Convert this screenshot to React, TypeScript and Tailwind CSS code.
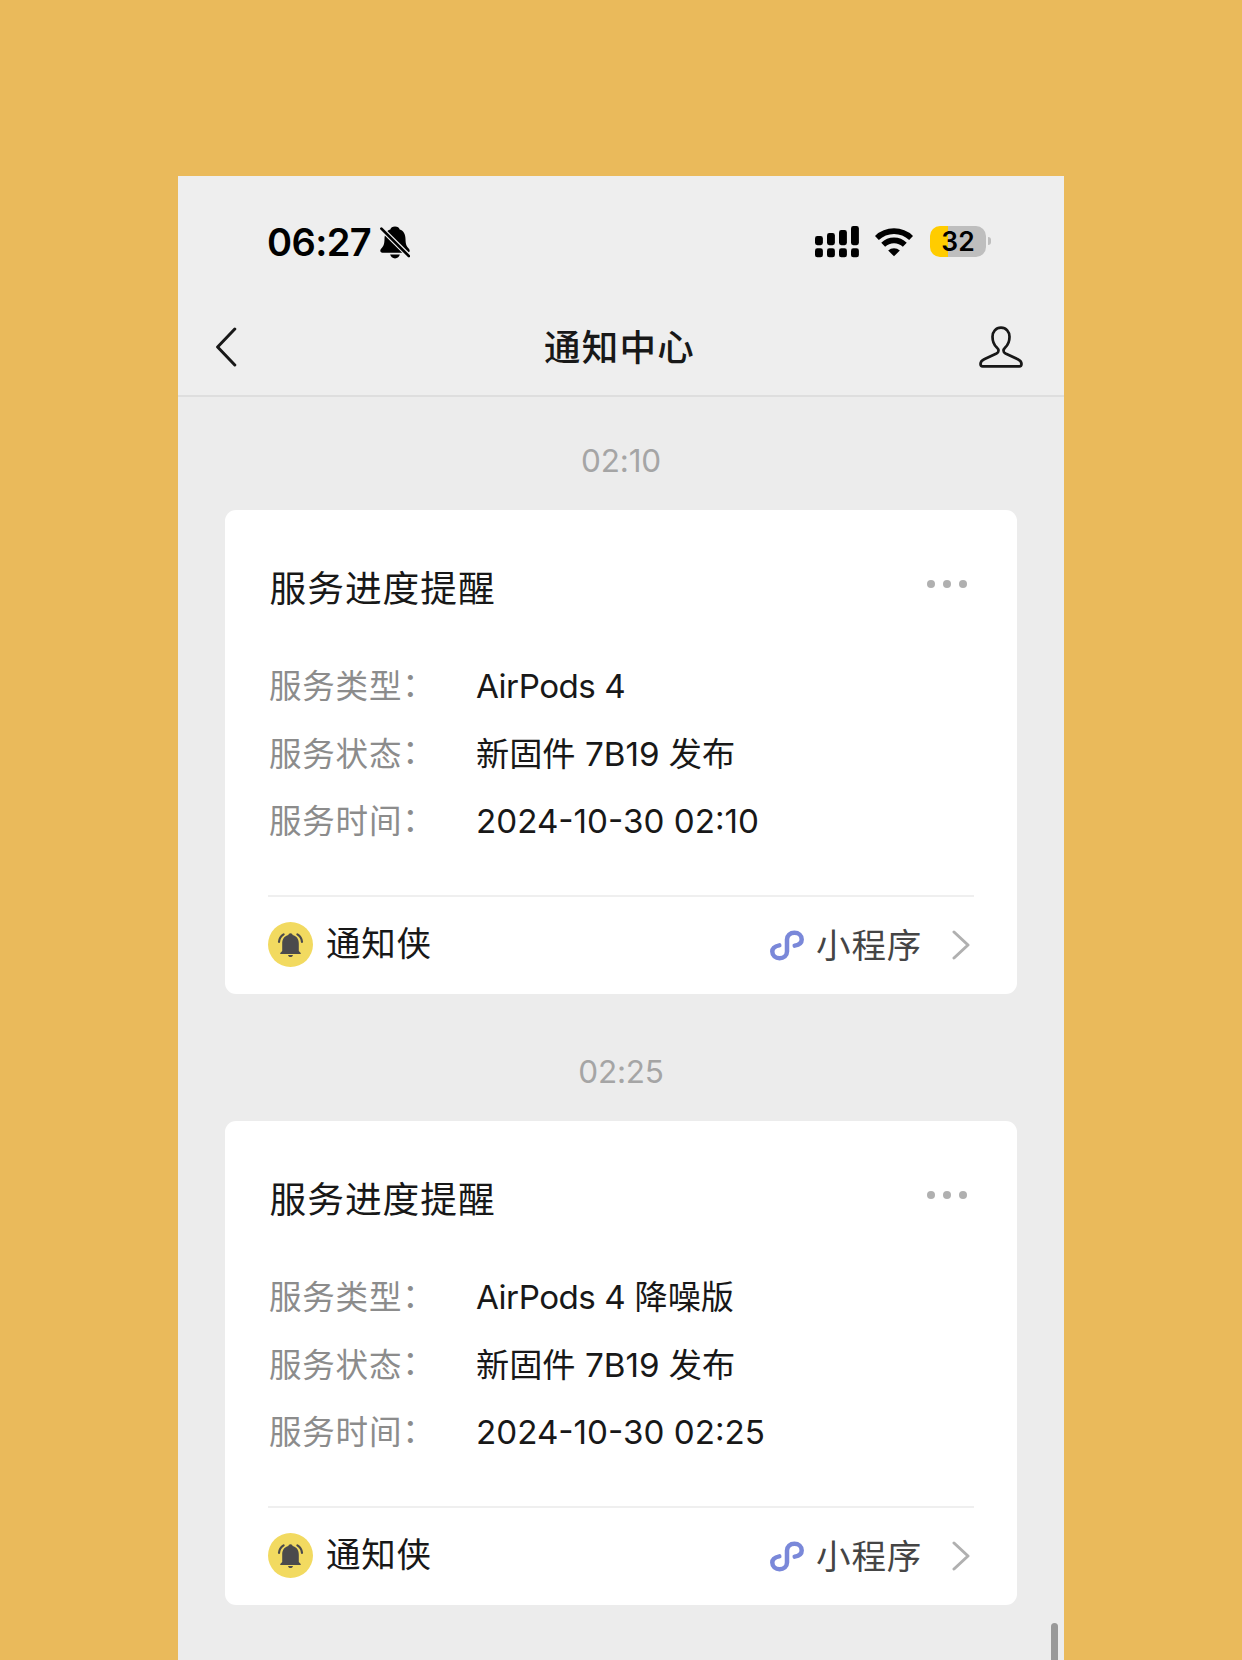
import React from 'react';

interface Notice {
  time: string;
  title: string;
  rows: { label: string; value: string }[];
}

const notices: Notice[] = [
  {
    time: '02:10',
    title: '服务进度提醒',
    rows: [
      { label: '服务类型', value: 'AirPods 4' },
      { label: '服务状态', value: '新固件 7B19 发布' },
      { label: '服务时间', value: '2024-10-30 02:10' },
    ],
  },
  {
    time: '02:25',
    title: '服务进度提醒',
    rows: [
      { label: '服务类型', value: 'AirPods 4 降噪版' },
      { label: '服务状态', value: '新固件 7B19 发布' },
      { label: '服务时间', value: '2024-10-30 02:25' },
    ],
  },
];

const BellSlashIcon = () => (
  <svg className="w-[30px] h-[33px]" viewBox="0 0 30 33" fill="none">
    <path d="M15 0.500c-2.600 0-4.200 1.300-4.700 3.100C6.300 4.900 4.600 8.300 4.500 13c-.1 5-.9 6.700-2.500 8.700C1 22.900.3 23.700.3 24.800c0 1 .8 1.900 2 1.900h25.400c1.200 0 2-.9 2-1.900 0-1.100-.7-1.900-1.700-3.100-1.600-2-2.400-3.700-2.500-8.700-.1-4.700-1.800-8.100-5.800-9.400-.5-1.800-2.100-3.100-4.700-3.100z" fill="#000" />
    <path d="M10.200 28.600h9.600c-.5 2.300-2.300 3.900-4.800 3.900s-4.300-1.600-4.800-3.900z" fill="#000" />
    <path d="M-1 0.300 31 32" stroke="#eee" strokeWidth="5" />
    <path d="M1.400 2.600 28.900 30.100" stroke="#000" strokeWidth="2.700" strokeLinecap="round" />
  </svg>
);

const SignalIcon = () => (
  <svg className="w-[44px] h-[32px]" viewBox="0 0 44 32" fill="#000">
    <rect x="0" y="10" width="7.900" height="9.200" rx="2.400" />
    <rect x="12" y="7" width="7.900" height="12.200" rx="2.400" />
    <rect x="24" y="4" width="7.900" height="15.200" rx="2.400" />
    <rect x="36" y="0" width="7.900" height="19.200" rx="2.400" />
    <rect x="0" y="22.300" width="7.900" height="9" rx="2.400" />
    <rect x="12" y="22.300" width="7.900" height="9" rx="2.400" />
    <rect x="24" y="22.300" width="7.900" height="9" rx="2.400" />
    <rect x="36" y="22.300" width="7.900" height="9" rx="2.400" />
  </svg>
);

const WifiIcon = () => (
  <svg className="w-[38px] h-[29px]" viewBox="0 0 38 29" fill="none" stroke="#000" strokeWidth="5.600">
    <path d="M1.900 10a24.800 24.800 0 0 1 34.200 0" />
    <path d="M8.200 16.700a15.600 15.600 0 0 1 21.600 0" />
    <path d="M19 28.300 13.200 22.500a8.300 8.300 0 0 1 11.600 0z" fill="#000" stroke="none" />
  </svg>
);

const PersonIcon = () => (
  <svg className="w-[44px] h-[42px]" viewBox="0 0 44 42" fill="none" stroke="#181818" strokeWidth="2.700" strokeLinejoin="round">
    <path d="M22 1.700c-5.200 0-8.500 3.900-8.500 9 0 5 1.600 8.300 4.300 10.700 2.200 2 2.400 4.700-.3 6.100L5.200 33.200C2.600 34.400 1.500 35.600 1.500 38c0 1.600.7 2.300 2.200 2.300h36.600c1.500 0 2.200-.7 2.200-2.300 0-2.400-1.100-3.600-3.700-4.800L26.500 27.500c-2.700-1.400-2.500-4.100-.3-6.100 2.700-2.400 4.300-5.700 4.300-10.700 0-5.100-3.300-9-8.500-9z" />
  </svg>
);

const BellBadge = () => (
  <svg className="w-[45px] h-[45px]" viewBox="0 0 45 45" fill="none">
    <circle cx="22.500" cy="22.500" r="22.500" fill="#f2da60" />
    <path d="M22.500 11.300c-1.200 0-2 .8-2.100 1.800-4.200 1-6.200 4.300-6.200 8.600v7.300l-1.700 1.700c-.6.600-.3 1.400.5 1.400h19c.8 0 1.100-.8.5-1.400L30.800 29v-7.300c0-4.300-2-7.600-6.200-8.600-.1-1-.9-1.800-2.100-1.800z" fill="#4b4a4c" />
    <path d="M20 33h5c-.2 1.300-1.200 2.100-2.500 2.100S20.200 34.300 20 33z" fill="#4b4a4c" />
    <path d="M15.600 12.400c-2.700 1.700-4.300 4.200-4.600 7.400M29.400 12.400c2.700 1.700 4.300 4.200 4.600 7.400" stroke="#4b4a4c" strokeWidth="2.200" strokeLinecap="round" />
  </svg>
);

const MiniProgramIcon = () => (
  <svg className="w-[34px] h-[31px]" viewBox="0 0 34 31" fill="none" stroke="#7a88d9" strokeWidth="4.500" strokeLinecap="round">
    <path d="M9.300 15.400C5 16.200 2.300 18.300 2.300 21.600c0 3.900 3.200 6.700 7.300 6.700s7.400-2.800 7.400-6.700V9.400c0-3.900 3.200-6.700 7.400-6.700s7.300 2.800 7.300 6.700c0 3.300-2.700 5.400-7 6.200" />
  </svg>
);

const StatusBar = () => (
  <div className="flex h-[132px] items-center justify-between pl-[89px] pr-[73px]">
    <div className="flex items-center">
      <span className="w-[113px] text-[38px] font-semibold leading-none tracking-[-0.600px] text-black">06:27</span>
      <BellSlashIcon />
    </div>
    <div className="flex items-center">
      <SignalIcon />
      <div className="ml-4">
        <WifiIcon />
      </div>
      <div className="mb-px ml-[17px] flex h-[31px] w-[56px] items-center justify-center rounded-[10px] bg-linear-to-r from-[#ffcc00] from-33% to-[#bebebe] to-33%">
        <span className="text-[26.500px] font-semibold leading-none text-black">32</span>
      </div>
      <div className="mb-0.5 ml-0.5 h-[8px] w-[3px] rounded-r-full bg-[#bebebe]" />
    </div>
  </div>
);

const NavBar = () => (
  <div className="flex h-[89px] items-center justify-between border-b-2 border-[#dedede] pb-[9px] pl-[38px] pr-[41px]">
    <svg className="w-[44px] h-[40px]" viewBox="0 0 44 40" fill="none" stroke="#181818" strokeWidth="3" strokeLinecap="round" strokeLinejoin="round">
      <path d="M18.800 2 1.600 20l17.200 18" />
    </svg>
    <h1 className="pt-[3px] text-[36.500px] font-medium leading-none tracking-[1.200px] text-[#181818]">通知中心</h1>
    <PersonIcon />
  </div>
);

const NoticeCard: React.FC<{ notice: Notice }> = ({ notice }) => (
  <section>
    <div className="flex h-[99px] items-center justify-center text-[31.500px] tracking-[-0.200px] text-[#a5a5a5]">{notice.time}</div>
    <div className="mx-[47px] h-[484px] rounded-[11px] bg-white px-[43px]">
      <div className="flex h-[142px] items-center justify-between pt-[16px]">
        <h2 className="pl-[1.500px] pt-px text-[36.700px] leading-none tracking-[1px] text-[#181818]">{notice.title}</h2>
        <div className="mr-[7px] flex gap-2 pb-[10px]">
          <i className="size-2 rounded-full bg-[#b0b0b0]" />
          <i className="size-2 rounded-full bg-[#b0b0b0]" />
          <i className="size-2 rounded-full bg-[#b0b0b0]" />
        </div>
      </div>
      <dl className="pt-px">
        {notice.rows.map((row) => (
          <div key={row.label} className="flex h-[67.600px] items-center whitespace-nowrap leading-none">
            <dt className="flex w-[208px] pl-px pt-px text-[32.500px] tracking-[0.800px] text-[#8c8c8c]">
              {row.label}
              <span className="-mt-[2.500px]">：</span>
            </dt>
            <dd className="text-[33.200px] text-[#181818]">
              {row.value.startsWith('AirPods') ? (
                <>
                  <span className="tracking-[-0.500px]">AirPods 4</span>
                  {row.value.slice(9)}
                </>
              ) : (
                row.value
              )}
            </dd>
          </div>
        ))}
      </dl>
      <div className="mt-[39px] flex h-[99px] items-center justify-between border-t-2 border-[#efefef]">
        <div className="flex items-center gap-3 pb-px">
          <BellBadge />
          <span className="pb-[2px] pl-px text-[34.500px] leading-none tracking-[0.800px] text-[#181818]">通知侠</span>
        </div>
        <div className="flex items-center pr-1">
          <MiniProgramIcon />
          <span className="ml-3 pt-px text-[34.500px] leading-none tracking-[0.800px] text-[#454545]">小程序</span>
          <svg className="ml-[30px] w-[18px] h-[30px]" viewBox="0 0 18 30" fill="none" stroke="#b0b0b0" strokeWidth="3" strokeLinecap="round" strokeLinejoin="round">
            <path d="M2 2l14 13L2 28" />
          </svg>
        </div>
      </div>
    </div>
  </section>
);

const App: React.FC = () => {
  return (
    <div className="h-[1660px] w-[1242px] overflow-hidden bg-[#eaba5b] pl-[178px] pt-[176px] font-['Inter','Noto_Sans_CJK_SC',sans-serif]">
      <main className="relative h-full w-[886px] bg-[#ececec]">
        <header className="bg-[#eeeeee]">
          <StatusBar />
          <NavBar />
        </header>
        <div className="flex flex-col gap-7 pt-[14px]">
          {notices.map((notice) => (
            <NoticeCard key={notice.time} notice={notice} />
          ))}
        </div>
        {/* Scroll indicator */}
        <div className="absolute right-[6px] top-[1447px] h-[120px] w-[7px] rounded-full bg-[#999999]" />
      </main>
    </div>
  );
};

export default App;
